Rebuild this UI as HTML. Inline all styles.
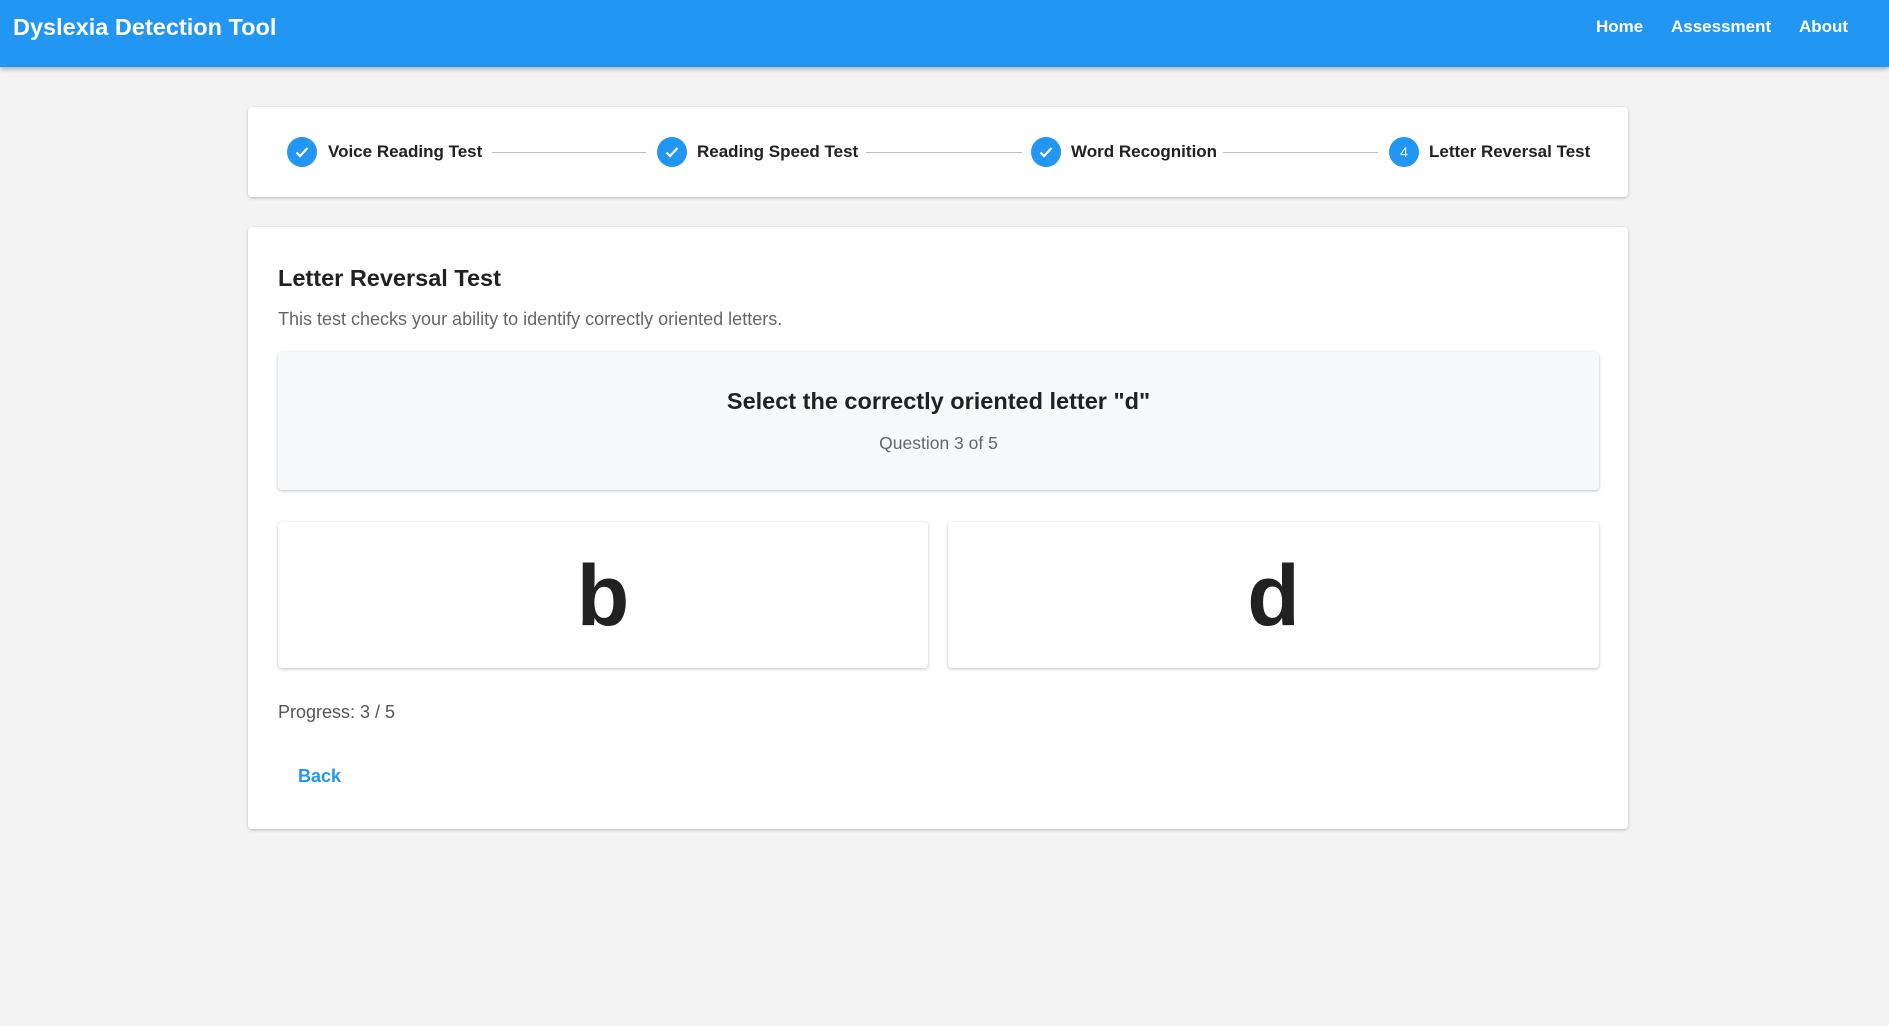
<!DOCTYPE html>
<html><head><meta charset="utf-8"><style>
*{margin:0;padding:0;box-sizing:border-box}
body{width:1889px;height:1026px;background:#f4f4f4;font-family:"Liberation Sans",Roboto,sans-serif;color:#212121;position:relative;overflow:hidden}
.hdr{position:absolute;left:0;top:0;width:1889px;height:67px;background:#2196f3;box-shadow:0 2px 5px rgba(0,0,0,.3)}
.hdr .t{position:absolute;left:13px;top:14px;font-size:23.5px;font-weight:bold;color:#fff}
.nav{position:absolute;top:17px;font-size:17px;font-weight:bold;color:#fff}
.card{position:absolute;background:#fff;border-radius:4px;box-shadow:0 1px 3px rgba(0,0,0,.25)}
.ic{position:absolute;top:137px;width:30px;height:30px;border-radius:50%;background:#2196f3;color:#fff;font-size:14px;text-align:center;line-height:30px}
.ic svg{position:absolute;left:7px;top:7px}
.st{position:absolute;top:142px;font-size:17px;font-weight:bold;color:#212121}
.ln{position:absolute;top:152px;height:1px;background:#bdbdbd}
.abs{position:absolute}
</style></head><body>
<div class="hdr"><div class="t">Dyslexia Detection Tool</div>
<div class="nav" style="left:1596px">Home</div>
<div class="nav" style="left:1671px">Assessment</div>
<div class="nav" style="left:1799px">About</div></div>

<div class="card" style="left:248px;top:107px;width:1380px;height:90px"></div>
<div class="ic" style="left:287px"><svg width="16" height="16" viewBox="0 0 16 16"><path d="M2.5 8.5l3.5 3.5 7.5-8" stroke="#fff" stroke-width="2.2" fill="none"/></svg></div>
<div class="st" style="left:328px">Voice Reading Test</div>
<div class="ln" style="left:492px;width:154px"></div>
<div class="ic" style="left:657px"><svg width="16" height="16" viewBox="0 0 16 16"><path d="M2.5 8.5l3.5 3.5 7.5-8" stroke="#fff" stroke-width="2.2" fill="none"/></svg></div>
<div class="st" style="left:697px">Reading Speed Test</div>
<div class="ln" style="left:866px;width:156px"></div>
<div class="ic" style="left:1031px"><svg width="16" height="16" viewBox="0 0 16 16"><path d="M2.5 8.5l3.5 3.5 7.5-8" stroke="#fff" stroke-width="2.2" fill="none"/></svg></div>
<div class="st" style="left:1071px">Word Recognition</div>
<div class="ln" style="left:1223px;width:155px"></div>
<div class="ic" style="left:1389px">4</div>
<div class="st" style="left:1429px">Letter Reversal Test</div>

<div class="card" style="left:248px;top:227px;width:1380px;height:602px"></div>
<div class="abs" style="left:278px;top:265px;font-size:23.5px;font-weight:bold">Letter Reversal Test</div>
<div class="abs" style="left:278px;top:309px;font-size:18px;color:#666">This test checks your ability to identify correctly oriented letters.</div>
<div class="card" style="left:278px;top:352px;width:1321px;height:138px;background:#f7f8f9"></div>
<div class="abs" style="left:278px;width:1321px;top:388px;text-align:center;font-size:23.5px;font-weight:bold">Select the correctly oriented letter "d"</div>
<div class="abs" style="left:278px;width:1321px;top:433px;text-align:center;font-size:17.5px;color:#666">Question 3 of 5</div>
<div class="card" style="left:278px;top:522px;width:650px;height:146px"></div>
<div class="card" style="left:948px;top:522px;width:651px;height:146px"></div>
<div class="abs" style="left:278px;width:650px;top:546px;text-align:center;font-size:86px;font-weight:bold;line-height:100px">b</div>
<div class="abs" style="left:948px;width:651px;top:546px;text-align:center;font-size:86px;font-weight:bold;line-height:100px">d</div>
<div class="abs" style="left:278px;top:702px;font-size:18px;color:#555">Progress: 3 / 5</div>
<div class="abs" style="left:298px;top:766px;font-size:18px;font-weight:bold;color:#2196f3">Back</div>
</body></html>
